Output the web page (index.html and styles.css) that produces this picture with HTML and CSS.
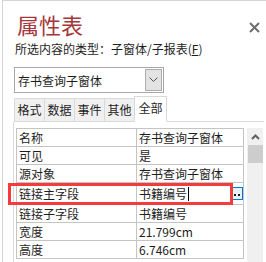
FILE: index.html
```html
<!DOCTYPE html>
<html lang="zh-CN">
<head>
    <meta charset="UTF-8">
    <title>属性表</title>
    <link rel="stylesheet" href="styles.css">
</head>
<body>
    <div class="sheet">
        <!-- header -->
        <div class="head">
            <div class="title">属性表</div>
            <div class="close">
                <svg width="11" height="11" viewBox="0 0 11 11">
                    <path d="M1 1 L10 10 M10 1 L1 10" stroke="#6e6e6e" stroke-width="2"/>
                </svg>
            </div>
        </div>
        <div class="kind">所选内容的类型：子窗体/子报表(<u>F</u>)</div>

        <!-- object picker -->
        <div class="combo">
            <span class="combo-text">存书查询子窗体</span>
            <span class="combo-btn">
                <svg width="9" height="6" viewBox="0 0 9 6">
                    <path d="M0.5 0.5 L4.5 4.5 L8.5 0.5" stroke="#555" stroke-width="1" fill="none"/>
                </svg>
            </span>
        </div>

        <!-- tabs -->
        <div class="tabs">
            <span class="tab">格式</span>
            <span class="tab">数据</span>
            <span class="tab">事件</span>
            <span class="tab">其他</span>
            <span class="tab active">全部</span>
            <span class="tab-rest"></span>
        </div>

        <div class="panel">
            <table class="props">
                <tr><td class="k">名称</td><td class="v">存书查询子窗体</td></tr>
                <tr><td class="k">可见</td><td class="v">是</td></tr>
                <tr><td class="k">源对象</td><td class="v">存书查询子窗体</td></tr>
                <tr class="editing">
                    <td class="k">链接主字段</td>
                    <td class="v">
                        <div class="edit">
                            <span>书籍编号</span><span class="caret"></span>
                            <span class="dots">
                                <svg width="6" height="2" viewBox="0 0 6 2">
                                    <rect x="0" y="0" width="2" height="2" fill="#1e1e1e"/>
                                    <rect x="4" y="0" width="2" height="2" fill="#1e1e1e"/>
                                </svg>
                            </span>
                        </div>
                    </td>
                </tr>
                <tr><td class="k">链接子字段</td><td class="v">书籍编号</td></tr>
                <tr><td class="k">宽度</td><td class="v">21.799cm</td></tr>
                <tr><td class="k">高度</td><td class="v">6.746cm</td></tr>
            </table>
            <div class="scroll">
                <div class="arrow">
                    <svg width="9" height="6" viewBox="0 0 9 6">
                        <path d="M1 5 L4.5 1.5 L8 5" stroke="#606060" stroke-width="2" fill="none"/>
                    </svg>
                </div>
                <div class="thumb"></div>
            </div>
            <!-- annotation around the edited row -->
            <div class="mark"></div>
        </div>
    </div>
</body>
</html>
```

FILE: styles.css
```css
body {
    margin: 0;
    width: 266px;
    height: 262px;
    overflow: hidden;
    background: #fff;
    font-family: "Noto Sans CJK SC", "Microsoft YaHei", sans-serif;
    font-size: 12px;
    color: #1e1e1e;
}
.sheet {
    margin-left: 2px;
    height: 262px;
    border-top: 1px solid #d5d5d5;
    border-left: 1px solid #d5d5d5;
    box-sizing: border-box;
}
.head {
    display: flex;
    justify-content: space-between;
    align-items: flex-start;
    padding: 8px 5px 0 14px;
}
.title {
    font-size: 22px;
    line-height: 30px;
    color: #a4373a;
}
.close {
    padding-top: 10px;
    padding-right: 1px;
}
.kind {
    padding-left: 12px;
    line-height: 16px;
    margin-top: 2px;
}
.combo {
    display: flex;
    justify-content: space-between;
    align-items: center;
    width: 150px;
    height: 26px;
    margin: 10px 0 0 11px;
    border: 1px solid #a6a6a6;
    box-sizing: border-box;
    padding: 0 1px 0 3px;
}
.combo-btn {
    display: flex;
    align-items: center;
    justify-content: center;
    width: 17px;
    height: 22px;
    background: #e3e3e3;
    border: 1px solid #acacac;
    box-sizing: border-box;
}
.tabs {
    display: flex;
    align-items: flex-end;
    height: 29px;
    margin-left: 11px;
}
.tab {
    height: 22px;
    line-height: 22px;
    padding: 0 2px;
    width: 25px;
    text-align: center;
    background: #f0f0f0;
    border: 1px solid #d9d9d9;
    border-right: none;
    border-bottom: 1px solid #d9d9d9;
}
.tab.active {
    height: 24px;
    background: #fff;
    border-right: 1px solid #d9d9d9;
    border-bottom: 1px solid #fff;
    width: 27px;
}
.tab-rest {
    flex: 1;
    border-bottom: 1px solid #d9d9d9;
    margin-right: 2px;
}
.panel {
    position: relative;
    display: flex;
    gap: 3px;
    margin-left: 10px;
    padding: 6px 0 0 2px;
    height: 140px;
    border-left: 1px solid #d9d9d9;
}
.props {
    border-collapse: collapse;
    width: 228px;
    table-layout: fixed;
    align-self: flex-start;
}
.props td {
    border: 1px solid #c4c4c4;
    height: 17px;
    padding: 0 0 0 2px;
    line-height: 17px;
    white-space: nowrap;
    overflow: hidden;
}
.props .k { width: 117px; }
.props .editing td { height: 21px; }
.edit {
    display: flex;
    align-items: center;
}
.caret {
    width: 1px;
    height: 14px;
    background: #000;
    margin-left: 1px;
}
.dots {
    margin-left: auto;
    display: flex;
    align-items: flex-end;
    justify-content: center;
    width: 13px;
    height: 13px;
    padding-bottom: 3px;
    box-sizing: border-box;
    background: #e5f1fb;
    border: 1px solid #0078d7;
}
.scroll {
    width: 16px;
    background: #f0f0f0;
    display: flex;
    flex-direction: column;
    align-items: center;
}
.arrow {
    height: 17px;
    display: flex;
    align-items: center;
}
.thumb {
    width: 15px;
    height: 18px;
    background: #cdcdcd;
}
.mark {
    position: absolute;
    left: -6px;
    top: 61px;
    width: 219px;
    height: 16px;
    border: 3px solid #f53b3b;
}
```
